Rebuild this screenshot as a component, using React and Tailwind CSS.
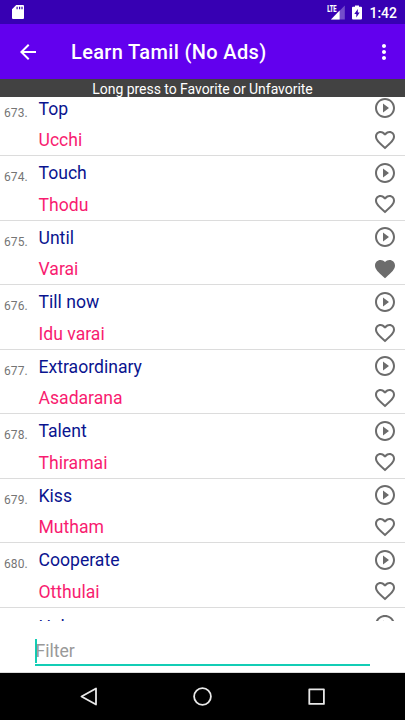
const rows = [
  { n: 673, en: "Top", ta: "Ucchi" },
  { n: 674, en: "Touch", ta: "Thodu" },
  { n: 675, en: "Until", ta: "Varai", fav: true },
  { n: 676, en: "Till now", ta: "Idu varai" },
  { n: 677, en: "Extraordinary", ta: "Asadarana" },
  { n: 678, en: "Talent", ta: "Thiramai" },
  { n: 679, en: "Kiss", ta: "Mutham" },
  { n: 680, en: "Cooperate", ta: "Otthulai" },
];

function Icon({ d, className }) {
  return (
    <svg viewBox="0 0 24 24" fill="currentColor" className={className}>
      <path d={d} />
    </svg>
  );
}

const PLAY =
  "M10 16.5l6-4.5-6-4.5v9zM12 2C6.48 2 2 6.48 2 12s4.48 10 10 10 10-4.48 10-10S17.52 2 12 2zm0 18c-4.41 0-8-3.59-8-8s3.59-8 8-8 8 3.59 8 8-3.59 8-8 8z";
const HEART =
  "M12 21.35l-1.45-1.32C5.4 15.36 2 12.28 2 8.5 2 5.42 4.42 3 7.5 3c1.74 0 3.41.81 4.5 2.09C13.09 3.81 14.76 3 16.5 3 19.58 3 22 5.42 22 8.5c0 3.78-3.4 6.86-8.55 11.54L12 21.35z";
const HEART_OUTLINE =
  "M16.5 3c-1.74 0-3.41.81-4.5 2.09C10.91 3.81 9.24 3 7.5 3 4.42 3 2 5.42 2 8.5c0 3.78 3.4 6.86 8.55 11.54L12 21.35l1.45-1.32C18.6 15.36 22 12.28 22 8.5 22 5.42 19.58 3 16.5 3zm-4.4 15.55l-.1.1-.1-.1C7.14 14.24 4 11.39 4 8.5 4 6.5 5.5 5 7.5 5c1.54 0 3.04.99 3.57 2.36h1.87C13.46 5.99 14.96 5 16.5 5c2 0 3.5 1.5 3.5 3.5 0 2.89-3.14 5.74-7.9 10.05z";

function StatusBar() {
  return (
    <header className="flex h-6 shrink-0 items-center bg-[#3700b3] pr-2 pl-3 text-white">
      <svg viewBox="0 0 12 14" className="h-3.5 w-3">
        <path
          fill="currentColor"
          fillRule="evenodd"
          d="M4.2 0H11a1 1 0 0 1 1 1v12a1 1 0 0 1-1 1H1a1 1 0 0 1-1-1V4.2zM4.5 1.8v2.4h1.2V1.8zM7 1.8v2.4h1.2V1.8zM9.4 1.8v2.4h1.2V1.8z"
        />
      </svg>
      <svg viewBox="0 0 18 15" className="ml-auto h-[15px] w-[18px]">
        <path fill="#fff" fillOpacity="0.3" d="M17.8 0.5v14H4z" />
        <path fill="#fff" d="M12.6 5.5v9H4z" />
        <rect width="10" height="7.8" fill="#3700b3" />
        <text x="0.2" y="7" fill="#fff" stroke="#fff" strokeWidth="0.2" fontFamily="Roboto" fontWeight="700" fontSize="8.8" textLength="9.2" lengthAdjust="spacingAndGlyphs">LTE</text>
      </svg>
      <svg viewBox="0 0 10 15" className="mr-[7px] ml-[7px] h-[15px] w-2.5">
        <path
          fill="currentColor"
          fillRule="evenodd"
          d="M3 .5h4v1.3h2a1 1 0 0 1 1 1v10.7a1 1 0 0 1-1 1H1a1 1 0 0 1-1-1V2.8a1 1 0 0 1 1-1h2zM5.8 4L2.3 9h2v3.5L7.7 7.5H5.8z"
        />
      </svg>
      <span className="pt-px text-[14px] leading-none font-medium">1:42</span>
    </header>
  );
}

function Row({ n, en, ta, fav }) {
  return (
    <li className="flex h-[64.5px] border-b border-[#dcdcdc]">
      <span className="w-[38.5px] shrink-0 pt-[9px] pl-1 text-[12px] leading-6 tracking-[0.1px] text-[#757575]">{n}.</span>
      <div className="flex-1 text-[17.6px]">
        <p className="pt-[5px] leading-6 text-[#0a148f]">{en}</p>
        <p className="pt-[7.5px] leading-6 text-[#f81c70]">{ta}</p>
      </div>
      <div className="flex w-[31.75px] shrink-0 flex-col pt-[4.5px] text-[#6c6c6c]">
        <Icon d={PLAY} className="size-6" />
        <Icon d={fav ? HEART : HEART_OUTLINE} className="mt-[7.5px] size-6" />
      </div>
    </li>
  );
}

export default function App() {
  return (
    <div className="flex h-[720px] w-[405px] flex-col overflow-hidden bg-white font-['Roboto',sans-serif]">
      <StatusBar />
      <div className="flex h-[55px] shrink-0 items-center bg-[#6200ee] pr-[9.5px] pl-4 text-white">
        <Icon className="size-6" d="M20 11H7.83l5.59-5.59L12 4l-8 8 8 8 1.41-1.41L7.83 13H20v-2z" />
        <h1 className="ml-[31px] flex-1 text-[20px] font-medium tracking-[0.35px]">Learn Tamil (No Ads)</h1>
        <Icon
          className="size-6"
          d="M12 8c1.1 0 2-.9 2-2s-.9-2-2-2-2 .9-2 2 .9 2 2 2zm0 2c-1.1 0-2 .9-2 2s.9 2 2 2 2-.9 2-2-.9-2-2-2zm0 6c-1.1 0-2 .9-2 2s.9 2 2 2 2-.9 2-2-.9-2-2-2z"
        />
      </div>
      <div className="h-[18px] shrink-0 bg-[#424242] text-center text-[14px] leading-5 tracking-[-0.04px] text-white">
        Long press to Favorite or Unfavorite
      </div>
      <div className="h-[523.5px] shrink-0 overflow-hidden">
        <ul className="-mt-[5.5px]">
          {rows.map((r) => (
            <Row key={r.n} {...r} />
          ))}
          <li className="flex h-[64.5px]">
            <p className="ml-[38.5px] flex-1 pt-[7px] text-[17.6px] leading-6 text-[#0a148f]">Help</p>
            <div className="w-[31.75px] shrink-0 pt-[5px] text-[#6c6c6c]">
              <Icon d={PLAY} className="size-6" />
            </div>
          </li>
        </ul>
      </div>
      <div className="flex h-[52.5px] shrink-0 flex-col border-b border-[#dcdcdc] px-[35px]">
        <div className="mt-[17.5px] flex h-[26px] items-center">
          <span className="h-6 w-[1.5px] bg-[#13cdb5]" />
          <span className="-ml-px text-[17.6px] leading-6 text-[#999999]">Filter</span>
        </div>
        <div className="h-[2px] bg-[#13cdb5]" />
      </div>
      <nav className="flex flex-1 items-center justify-center bg-black">
        <svg viewBox="0 0 405 47" className="h-[47px] w-[405px]" fill="none" stroke="#e8e8e8" strokeWidth="1.8" strokeLinejoin="round">
          <path d="M96 15.5v16L81.5 23.5z" />
          <circle cx="202.5" cy="23.5" r="8.4" />
          <rect x="309.3" y="16.3" width="14.6" height="14.6" />
        </svg>
      </nav>
    </div>
  );
}
